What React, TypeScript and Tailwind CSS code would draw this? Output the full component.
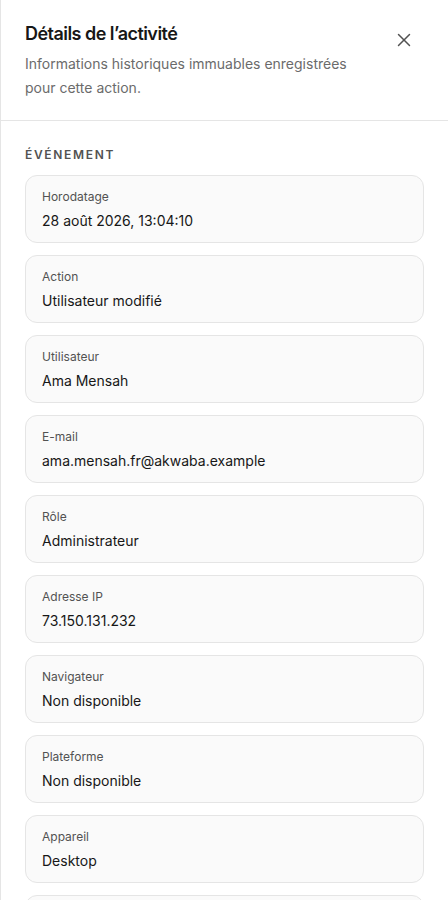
import React from "react";
import { X } from "lucide-react";

const items: { label: string; value: string }[] = [
  { label: "Horodatage", value: "28 août 2026, 13:04:10" },
  { label: "Action", value: "Utilisateur modifié" },
  { label: "Utilisateur", value: "Ama Mensah" },
  { label: "E-mail", value: "ama.mensah.fr@akwaba.example" },
  { label: "Rôle", value: "Administrateur" },
  { label: "Adresse IP", value: "73.150.131.232" },
  { label: "Navigateur", value: "Non disponible" },
  { label: "Plateforme", value: "Non disponible" },
  { label: "Appareil", value: "Desktop" },
  { label: "Système d’exploitation", value: "Non disponible" },
];

export default function App() {
  return (
    <div
      className="h-screen overflow-hidden bg-white border-l border-[#e5e5e5] text-[#171717]"
      style={{ fontFamily: "Inter, 'Noto Sans', sans-serif" }}
    >
      <div className="flex items-start justify-between px-6 py-5 border-b border-[#e5e5e5]">
        <div className="flex flex-col gap-1 max-w-[340px]">
          <h2 className="text-[18px] leading-7 font-semibold tracking-[-0.03em] text-[#171717]">
            Détails de l’activité
          </h2>
          <p className="text-[14px] leading-6 text-[#6b6b6b]">
            Informations historiques immuables enregistrées pour cette action.
          </p>
        </div>
        <button className="h-10 w-10 flex items-center justify-center text-[#525252]">
          <X size={22} strokeWidth={1.6} />
        </button>
      </div>
      <div className="px-6 pt-[26px]">
        <div className="text-[12px] leading-4 font-semibold tracking-[0.14em] uppercase text-[#525252] mb-3">
          Événement
        </div>
        <div className="flex flex-col gap-3">
          {items.map((it) => (
            <div
              key={it.label}
              className="rounded-xl border border-[#e5e5e5] bg-[#fafafa] px-4 pt-[13px] pb-[9px]"
            >
              <div className="text-[12px] leading-4 text-[#525252]">{it.label}</div>
              <div className="mt-1 text-[14px] leading-6 text-[#171717]">{it.value}</div>
            </div>
          ))}
        </div>
      </div>
    </div>
  );
}
